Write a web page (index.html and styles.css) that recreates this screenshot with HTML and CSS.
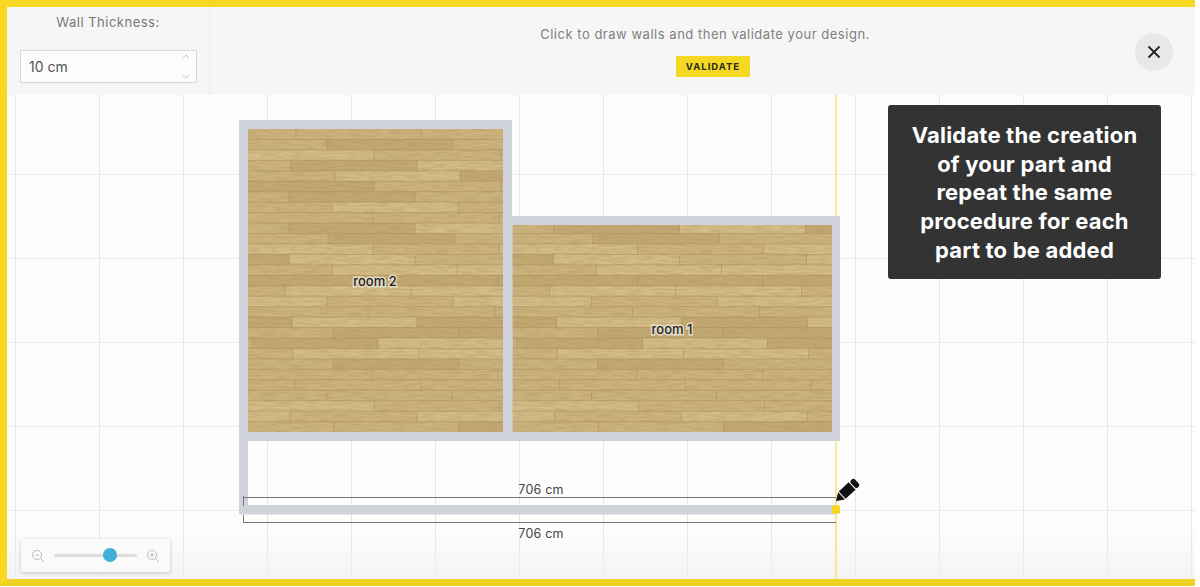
FILE: index.html
```html
<!DOCTYPE html>
<html>
<head>
  <meta charset="UTF-8">
  <title>Floor Planner</title>
  <link rel="stylesheet" href="styles.css">
</head>
<body>
  <div class="frame">
    <div class="toolbar">
      <div class="thickness">
        <div class="thickness-label">Wall Thickness:</div>
        <div class="spinner">
          <span>10 cm</span>
          <svg class="spinner-arrows" width="8" height="25" viewBox="0 0 8 25">
            <path d="M1 4l3-3 3 3M1 21l3 3 3-3"/>
          </svg>
        </div>
      </div>
      <div class="hint">
        <p>Click to draw walls and then validate your design.</p>
        <button class="btn-validate">VALIDATE</button>
      </div>
      <button class="btn-close">
        <svg width="14" height="14" viewBox="0 0 14 14"><path d="M1.5 1.5l11 11M12.5 1.5l-11 11"/></svg>
      </button>
    </div>

    <div class="canvas">
      <!-- viewBox uses the same numbers as the page, so plan points read directly -->
      <svg class="plan" width="1188" height="484" viewBox="7 95 1188 484">
        <defs>
          <filter id="grain" x="0" y="0" width="100%" height="100%">
            <feTurbulence type="fractalNoise" baseFrequency=".07 .5" numOctaves="3" seed="7"/>
            <feColorMatrix values="0 0 0 0 .42  0 0 0 0 .3  0 0 0 0 .12  .9 0 0 0 -.3"/>
          </filter>
          <g id="wood">
            <rect class="wood-m" width="340" height="304"/>
            <g transform="scale(1 10.45)">
              <g class="wood-l">
                <rect x="0" y="2" width="126" height="1"/>
                <rect x="169" y="3" width="126" height="1"/>
                <rect x="87" y="4" width="125" height="1"/>
                <rect x="84" y="7" width="126" height="1"/>
                <rect x="167" y="9" width="126" height="1"/>
                <rect x="0" y="11" width="125" height="1"/>
                <rect x="251" y="11" width="89" height="1"/>
                <rect x="41" y="12" width="126" height="1"/>
                <rect x="294" y="12" width="46" height="1"/>
                <rect x="84" y="13" width="125" height="1"/>
                <rect x="209" y="13" width="131" height="1"/>
                <rect x="37" y="15" width="252" height="1"/>
                <rect x="0" y="16" width="79" height="1"/>
                <rect x="205" y="16" width="135" height="1"/>
                <rect x="44" y="18" width="125" height="1"/>
                <rect x="295" y="18" width="45" height="1"/>
                <rect x="130" y="20" width="125" height="1"/>
                <rect x="45" y="21" width="251" height="1"/>
                <rect x="0" y="26" width="126" height="1"/>
                <rect x="0" y="27" width="42" height="1"/>
                <rect x="169" y="27" width="126" height="1"/>
              </g>
              <g class="wood-d">
                <rect x="79" y="1" width="126" height="1"/>
                <rect x="43" y="3" width="126" height="1"/>
                <rect x="212" y="4" width="128" height="1"/>
                <rect x="0" y="5" width="126" height="1"/>
                <rect x="41" y="6" width="126" height="1"/>
                <rect x="41" y="9" width="126" height="1"/>
                <rect x="293" y="9" width="47" height="1"/>
                <rect x="80" y="10" width="127" height="1"/>
                <rect x="0" y="12" width="41" height="1"/>
                <rect x="0" y="14" width="340" height="1"/>
                <rect x="0" y="18" width="44" height="1"/>
                <rect x="169" y="18" width="126" height="1"/>
                <rect x="85" y="19" width="255" height="1"/>
                <rect x="4" y="20" width="126" height="1"/>
                <rect x="255" y="20" width="85" height="1"/>
                <rect x="85" y="22" width="126" height="1"/>
                <rect x="211" y="28" width="129" height="1"/>
              </g>
            </g>
            <rect width="340" height="304" filter="url(#grain)"/>
            <g transform="scale(1 10.45)">
              <path class="wood-seams" d="M0 1H340M0 2H340M0 3H340M0 4H340M0 5H340M0 6H340M0 7H340M0 8H340M0 9H340M0 10H340M0 11H340M0 12H340M0 13H340M0 14H340M0 15H340M0 16H340M0 17H340M0 18H340M0 19H340M0 20H340M0 21H340M0 22H340M0 23H340M0 24H340M0 25H340M0 26H340M0 27H340M0 28H340"/>
              <path class="wood-seams" d="M48 0v1M173 0v1M299 0v1M79 1v1M205 1v1M331 1v1M126 2v1M253 2v1M43 3v1M169 3v1M295 3v1M87 4v1M212 4v1M338 4v1M126 5v1M253 5v1M41 6v1M167 6v1M293 6v1M84 7v1M210 7v1M336 7v1M125 8v1M251 8v1M41 9v1M167 9v1M293 9v1M80 10v1M207 10v1M333 10v1M125 11v1M251 11v1M41 12v1M167 12v1M294 12v1M84 13v1M209 13v1M335 13v1M125 14v1M250 14v1M37 15v1M163 15v1M289 15v1M79 16v1M205 16v1M331 16v1M120 17v1M247 17v1M44 18v1M169 18v1M295 18v1M85 19v1M211 19v1M337 19v1M4 20v1M130 20v1M255 20v1M45 21v1M171 21v1M296 21v1M85 22v1M211 22v1M337 22v1M124 23v1M250 23v1M47 24v1M173 24v1M299 24v1M79 25v1M204 25v1M330 25v1M126 26v1M252 26v1M42 27v1M169 27v1M295 27v1M86 28v1M211 28v1M337 28v1"/>
            </g>
          </g>
        </defs>

        <line class="guide" x1="836" y1="95" x2="836" y2="579"/>

        <!-- walls -->
        <path class="wall" d="M239 120H512V216H840V441H248V505H836V514.5H239z"/>

        <svg x="248" y="129" width="255" height="303" viewBox="0 0 255 303"><use href="#wood"/></svg>
        <svg x="512.5" y="225" width="319.5" height="207" viewBox="0 96 319.5 207"><use href="#wood"/></svg>

        <text class="room-name" x="375" y="285.5">room 2</text>
        <text class="room-name" x="672" y="333.5">room 1</text>

        <!-- measures -->
        <path class="measure" d="M243.5 496v10M243.5 497.5H836M243.5 515v8M243.5 522.5H836"/>
        <text class="measure-text" x="541" y="493.5">706 cm</text>
        <text class="measure-text" x="541" y="537.5">706 cm</text>

        <rect class="handle" x="832" y="505.5" width="8" height="8"/>

        <!-- pencil cursor -->
        <g transform="translate(836 501) rotate(-43)">
          <path class="pencil" d="M0 0L7.5-5V5z"/>
          <rect class="pencil" x="8.5" y="-5" width="13.5" height="10"/>
          <rect class="pencil" x="23" y="-5" width="5.5" height="10" rx="2.2"/>
        </g>
      </svg>

      <div class="tip">Validate the creation<br>of your part and<br>repeat the same<br>procedure for each<br>part to be added</div>

      <div class="zoom-box">
        <svg class="zoom-icon" width="14" height="14" viewBox="0 0 14 14">
          <circle cx="6" cy="6" r="4.6"/><path d="M3.8 6h4.4M9.5 9.5l3.5 3.5"/>
        </svg>
        <div class="zoom-track"><div class="zoom-knob"></div></div>
        <svg class="zoom-icon" width="14" height="14" viewBox="0 0 14 14">
          <circle cx="6" cy="6" r="4.6"/><path d="M3.8 6h4.4M6 3.8v4.4M9.5 9.5l3.5 3.5"/>
        </svg>
      </div>
    </div>
  </div>
</body>
</html>
```

FILE: styles.css
```css
html, body { margin: 0; height: 100%; background: #fff; overflow: hidden; }
body { font-family: Inter, "Open Sans", sans-serif; color: #666; }

.frame {
  width: 1188px;
  height: 572px;
  margin-right: 5px;
  border-top: 7px solid #f6d823;
  border-left: 7px solid #f6d823;
  border-bottom: 7px solid #f0d020;
  display: flex;
  flex-direction: column;
  background: #fdfdfd;
}

/* top bar */
.toolbar {
  height: 88px;
  flex: none;
  display: flex;
  background: #f6f6f6;
}
.thickness {
  width: 203px;
  flex: none;
  box-sizing: border-box;
  padding: 7px 13px 0;
  border-right: 1px solid #eee;
}
.thickness-label {
  text-align: center;
  font-size: 13px;
  line-height: 16px;
  letter-spacing: .5px;
  color: #777;
}
.spinner {
  margin-top: 20px;
  height: 33px;
  width: 177px;
  box-sizing: border-box;
  padding: 0 8px;
  display: flex;
  align-items: center;
  justify-content: space-between;
  background: #fcfcfc;
  border: 1px solid #d8d8d8;
  font-size: 14px;
  color: #555;
}
.spinner-arrows { fill: none; stroke: #c4c4c4; stroke-width: 1; margin-right: -2px; }

.hint {
  flex: 1;
  padding-top: 19px;
  padding-left: 65px;
  text-align: center;
}
.hint p {
  margin: 0 0 14px;
  font-size: 13px;
  line-height: 16px;
  letter-spacing: .52px;
  color: #808080;
}
.btn-validate {
  display: block;
  margin: 0 0 0 401px;
  width: 74px;
  height: 21px;
  padding: 0;
  border: none;
  border-radius: 1px;
  background: #f5d823;
  color: #2a2a1a;
  font-family: Inter, sans-serif;
  font-size: 9.5px;
  font-weight: 700;
  letter-spacing: 1px;
}
.btn-close {
  flex: none;
  width: 38px;
  height: 38px;
  margin: 26px 22px 0 0;
  padding: 0;
  border: none;
  border-radius: 50%;
  background: #e8e8e8;
  display: flex;
  align-items: center;
  justify-content: center;
}
.btn-close path { fill: none; stroke: #222; stroke-width: 1.8; }

/* drawing area */
.canvas {
  position: relative;
  flex: 1;
  background-image:
    linear-gradient(to bottom, rgba(240,240,240,0) 90%, rgba(240,240,240,.7)),
    linear-gradient(to right, #e6e6e6 1px, transparent 1px),
    linear-gradient(to bottom, #ebebeb 1px, transparent 1px);
  background-size: 100% 100%, 84px 84px, 84px 84px;
  background-position: 0 0, 8px 0, 0 79px;
}
.plan { position: absolute; left: 0; top: 0; display: block; }

.wall { fill: #d0d3da; }
.guide { stroke: #f3e27a; stroke-width: 1.5; }
.handle { fill: #f6d823; }
.pencil { fill: #111; }

.wood-m { fill: #cdb37c; }
.wood-l { fill: #d5bd88; }
.wood-d { fill: #c3a872; }
.wood-seams {
  fill: none;
  stroke: #a98c55;
  stroke-width: 1;
  stroke-opacity: .5;
  vector-effect: non-scaling-stroke;
}

.room-name {
  font-family: Inter, sans-serif;
  font-size: 13px;
  font-weight: 500;
  text-anchor: middle;
  fill: #222;
  paint-order: stroke;
  stroke: rgba(240,235,220,.75);
  stroke-width: 3px;
}
.measure { fill: none; stroke: #777; stroke-width: 1; }
.measure-text {
  font-family: Inter, sans-serif;
  font-size: 12.5px;
  text-anchor: middle;
  fill: #444;
  letter-spacing: .2px;
  paint-order: stroke;
  stroke: #fdfdfd;
  stroke-width: 3px;
}

.tip {
  position: absolute;
  left: 881px;
  top: 10px;
  width: 273px;
  height: 174px;
  box-sizing: border-box;
  padding: 16px 0 0;
  background: #333;
  border-radius: 3px;
  color: #fff;
  text-align: center;
  font-size: 22px;
  font-weight: 700;
  letter-spacing: .2px;
  line-height: 28.7px;
}

.zoom-box {
  position: absolute;
  left: 14px;
  top: 444px;
  width: 149px;
  height: 33px;
  box-sizing: border-box;
  padding: 0 10px;
  display: flex;
  align-items: center;
  gap: 9px;
  background: #fafafa;
  border-radius: 2px;
  box-shadow: 0 1px 4px rgba(0,0,0,.2);
}
.zoom-icon { flex: none; fill: none; stroke: #bdbdbd; stroke-width: 1; }
.zoom-track {
  position: relative;
  flex: 1;
  height: 3px;
  background: #ddd;
  border-radius: 2px;
}
.zoom-knob {
  position: absolute;
  left: 49px;
  top: -6px;
  width: 14px;
  height: 14px;
  border-radius: 50%;
  background: #3fb0dc;
}
```
